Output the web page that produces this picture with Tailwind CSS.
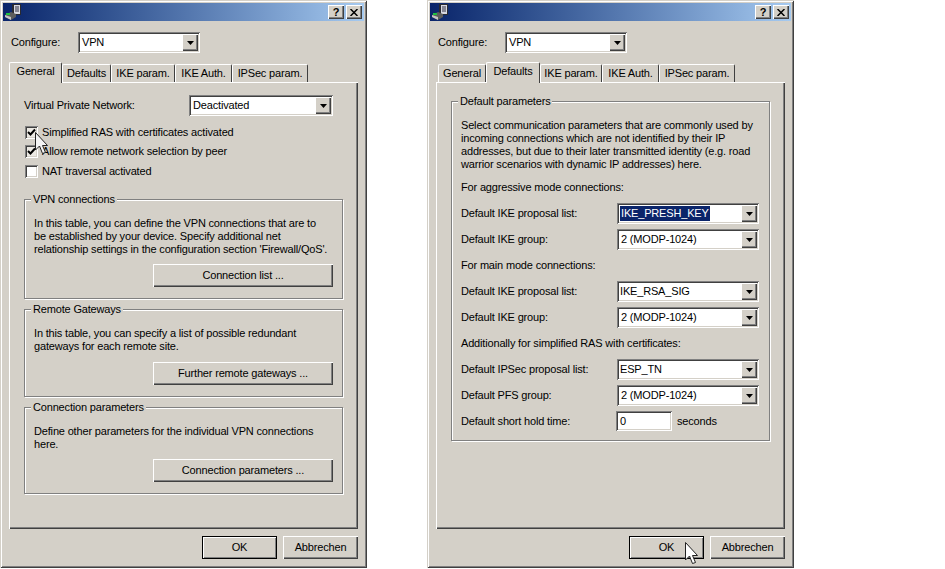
<!DOCTYPE html>
<html lang="en">
<head>
<meta charset="UTF-8">
<title>VPN configuration</title>
<script src="https://cdn.jsdelivr.net/npm/@tailwindcss/browser@4"></script>
</head>
<body class="bg-white">
<div class="flex gap-[60px] w-[945px] h-[569px] overflow-hidden font-['Liberation_Sans',Arial,sans-serif] text-[11px] tracking-[-0.17px] leading-[13px] text-black">

  <!-- left window: General -->
  <div class="relative w-[367px] h-[568px] p-[3px] bg-[#d4d0c8] shadow-[inset_1px_1px_0_#d4d0c8,inset_-1px_-1px_0_#404040,inset_2px_2px_0_#fff,inset_-2px_-2px_0_#808080]">
    <div class="flex items-center h-[18px] pl-[2px] pr-[2px] bg-linear-to-r from-[#0a246a] to-[#a6caf0]">
      <svg class="w-[16px] h-[16px]" viewBox="0 0 16 16"><rect x="7" y="0" width="9" height="11" fill="#2a2a30"/><rect x="9" y="1" width="6" height="9" fill="#d8d8e0"/><path d="M10 3h4M10 5h4M10 7h4" stroke="#334" stroke-width="1"/><path d="M0 11l6-3 5 2v3l-5 3-6-3z" fill="#5c5c5c"/><path d="M0 11l6 2v3l-6-3z" fill="#c4c4c4"/><rect x="1" y="9" width="4" height="2" fill="#20c040"/></svg>
      <div class="flex ml-auto gap-[2px]">
        <div class="flex items-center justify-center w-[16px] h-[14px] bg-[#d4d0c8] font-bold text-[11px] shadow-[inset_1px_1px_0_#fff,inset_-1px_-1px_0_#404040,inset_-2px_-2px_0_#808080]">?</div>
        <div class="flex items-center justify-center w-[16px] h-[14px] bg-[#d4d0c8] shadow-[inset_1px_1px_0_#fff,inset_-1px_-1px_0_#404040,inset_-2px_-2px_0_#808080]"><svg class="w-[8px] h-[7px]" viewBox="0 0 8 7"><path d="M0.5 0L7.5 7M7.5 0L0.5 7" stroke="#000" stroke-width="1.5"/></svg></div>
      </div>
    </div>
    <div class="px-[6px]">
      <div class="flex items-center mt-[11px] pl-[2px]">
        <span class="w-[67px]">Configure:</span>
        <div class="flex items-center justify-between w-[122px] h-[21px] p-[2px] pl-[4px] bg-white shadow-[inset_1px_1px_0_#808080,inset_-1px_-1px_0_#fff,inset_2px_2px_0_#404040,inset_-2px_-2px_0_#d4d0c8]">
          <span>VPN</span>
          <div class="flex items-center justify-center w-[16px] h-[17px] bg-[#d4d0c8] shadow-[inset_1px_1px_0_#fff,inset_-1px_-1px_0_#404040,inset_-2px_-2px_0_#808080]"><svg class="w-[7px] h-[4px]" viewBox="0 0 7 4"><path d="M0 0h7L3.5 4z"/></svg></div>
        </div>
      </div>
      <!-- tabs -->
      <div class="flex items-end h-[20px] mt-[9px]">
        <div class="relative z-10 flex items-center justify-center w-[53px] h-[21px] -mb-px pb-[3px] bg-[#d4d0c8] rounded-t-[2px] border-t border-l border-r border-t-white border-l-white border-r-[#404040]">General</div>
        <div class="flex items-center justify-center w-[49px] h-[18px] bg-[#d4d0c8] rounded-t-[2px] border-t border-l border-r border-t-white border-l-white border-r-[#404040]">Defaults</div>
        <div class="flex items-center justify-center w-[64px] h-[18px] bg-[#d4d0c8] rounded-t-[2px] border-t border-l border-r border-t-white border-l-white border-r-[#404040]">IKE param.</div>
        <div class="flex items-center justify-center w-[57px] h-[18px] bg-[#d4d0c8] rounded-t-[2px] border-t border-l border-r border-t-white border-l-white border-r-[#404040]">IKE Auth.</div>
        <div class="flex items-center justify-center w-[76px] h-[18px] bg-[#d4d0c8] rounded-t-[2px] border-t border-l border-r border-t-white border-l-white border-r-[#404040]">IPSec param.</div>
      </div>
      <!-- panel -->
      <div class="h-[447px] px-[15px] pt-[13px] bg-[#d4d0c8] shadow-[inset_1px_1px_0_#fff,inset_-1px_-1px_0_#404040,inset_-2px_-2px_0_#808080]">
        <div class="flex items-center justify-between w-[309px]">
          <span>Virtual Private Network:</span>
          <div class="flex items-center justify-between w-[144px] h-[21px] p-[2px] pl-[4px] bg-white shadow-[inset_1px_1px_0_#808080,inset_-1px_-1px_0_#fff,inset_2px_2px_0_#404040,inset_-2px_-2px_0_#d4d0c8]">
            <span>Deactivated</span>
            <div class="flex items-center justify-center w-[16px] h-[17px] bg-[#d4d0c8] shadow-[inset_1px_1px_0_#fff,inset_-1px_-1px_0_#404040,inset_-2px_-2px_0_#808080]"><svg class="w-[7px] h-[4px]" viewBox="0 0 7 4"><path d="M0 0h7L3.5 4z"/></svg></div>
          </div>
        </div>
        <div class="flex items-center h-[13px] mt-[10px] ml-px">
          <div class="flex items-center justify-center w-[13px] h-[13px] mr-[4px] bg-[#ece9e3] shadow-[inset_1px_1px_0_#808080,inset_-1px_-1px_0_#fff,inset_2px_2px_0_#404040,inset_-2px_-2px_0_#d4d0c8]"><svg class="w-[9px] h-[9px]" viewBox="0 0 9 9"><path d="M1 4l2.5 2.5L8 1.5" fill="none" stroke="#000" stroke-width="2"/></svg></div>
          <span>Simplified RAS with certificates activated</span>
        </div>
        <div class="flex items-center h-[13px] mt-[6px] ml-px">
          <div class="flex items-center justify-center w-[13px] h-[13px] mr-[4px] bg-[#ece9e3] shadow-[inset_1px_1px_0_#808080,inset_-1px_-1px_0_#fff,inset_2px_2px_0_#404040,inset_-2px_-2px_0_#d4d0c8]"><svg class="w-[9px] h-[9px]" viewBox="0 0 9 9"><path d="M1 4l2.5 2.5L8 1.5" fill="none" stroke="#000" stroke-width="2"/></svg></div>
          <span>Allow remote network selection by peer</span>
        </div>
        <div class="flex items-center h-[13px] mt-[7px] ml-px">
          <div class="w-[13px] h-[13px] mr-[4px] bg-white shadow-[inset_1px_1px_0_#808080,inset_-1px_-1px_0_#fff,inset_2px_2px_0_#404040,inset_-2px_-2px_0_#d4d0c8]"></div>
          <span>NAT traversal activated</span>
        </div>

        <div class="relative w-[319px] h-[100px] mt-[21px] pl-[9px] pr-[9px] pt-[17px] border border-[#808080] shadow-[1px_1px_0_#fff,inset_1px_1px_0_#fff]">
          <span class="absolute left-[6px] -top-[7px] px-[2px] bg-[#d4d0c8]">VPN connections</span>
          <p>In this table, you can define the VPN connections that are to<br>be established by your device. Specify additional net<br>relationship settings in the configuration section 'Firewall/QoS'.</p>
          <div class="flex items-center justify-center w-[180px] h-[23px] mt-[8px] ml-auto bg-[#d4d0c8] shadow-[inset_1px_1px_0_#fff,inset_-1px_-1px_0_#404040,inset_-2px_-2px_0_#808080]">Connection list ...</div>
        </div>
        <div class="relative w-[319px] h-[88px] mt-[10px] pl-[9px] pr-[9px] pt-[17px] border border-[#808080] shadow-[1px_1px_0_#fff,inset_1px_1px_0_#fff]">
          <span class="absolute left-[6px] -top-[7px] px-[2px] bg-[#d4d0c8]">Remote Gateways</span>
          <p>In this table, you can specify a list of possible redundant<br>gateways for each remote site.</p>
          <div class="flex items-center justify-center w-[180px] h-[23px] mt-[9px] ml-auto bg-[#d4d0c8] shadow-[inset_1px_1px_0_#fff,inset_-1px_-1px_0_#404040,inset_-2px_-2px_0_#808080]">Further remote gateways ...</div>
        </div>
        <div class="relative w-[319px] h-[87px] mt-[10px] pl-[9px] pr-[9px] pt-[17px] border border-[#808080] shadow-[1px_1px_0_#fff,inset_1px_1px_0_#fff]">
          <span class="absolute left-[6px] -top-[7px] px-[2px] bg-[#d4d0c8]">Connection parameters</span>
          <p>Define other parameters for the individual VPN connections<br>here.</p>
          <div class="flex items-center justify-center w-[180px] h-[23px] mt-[8px] ml-auto bg-[#d4d0c8] shadow-[inset_1px_1px_0_#fff,inset_-1px_-1px_0_#404040,inset_-2px_-2px_0_#808080]">Connection parameters ...</div>
        </div>
      </div>
      <div class="flex justify-end gap-[6px] mt-[7px]">
        <div class="flex items-center justify-center w-[75px] h-[23px] bg-[#d4d0c8] border border-black shadow-[inset_1px_1px_0_#fff,inset_-1px_-1px_0_#808080]">OK</div>
        <div class="flex items-center justify-center w-[75px] h-[23px] bg-[#d4d0c8] shadow-[inset_1px_1px_0_#fff,inset_-1px_-1px_0_#404040,inset_-2px_-2px_0_#808080]">Abbrechen</div>
      </div>
    </div>
    <svg class="absolute left-[35px] top-[132px] w-[13px] h-[23px]" viewBox="0 0 13 23"><path d="M0.5 0.5V18L4.5 14L7.5 21.5L10.5 20.5L7.5 13.5H12.5Z" fill="#f4f4f4" stroke="#222" stroke-width="1"/></svg>
  </div>

  <!-- right window: Defaults -->
  <div class="relative w-[367px] h-[568px] p-[3px] bg-[#d4d0c8] shadow-[inset_1px_1px_0_#d4d0c8,inset_-1px_-1px_0_#404040,inset_2px_2px_0_#fff,inset_-2px_-2px_0_#808080]">
    <div class="flex items-center h-[18px] pl-[2px] pr-[2px] bg-linear-to-r from-[#0a246a] to-[#a6caf0]">
      <svg class="w-[16px] h-[16px]" viewBox="0 0 16 16"><rect x="7" y="0" width="9" height="11" fill="#2a2a30"/><rect x="9" y="1" width="6" height="9" fill="#d8d8e0"/><path d="M10 3h4M10 5h4M10 7h4" stroke="#334" stroke-width="1"/><path d="M0 11l6-3 5 2v3l-5 3-6-3z" fill="#5c5c5c"/><path d="M0 11l6 2v3l-6-3z" fill="#c4c4c4"/><rect x="1" y="9" width="4" height="2" fill="#20c040"/></svg>
      <div class="flex ml-auto gap-[2px]">
        <div class="flex items-center justify-center w-[16px] h-[14px] bg-[#d4d0c8] font-bold text-[11px] shadow-[inset_1px_1px_0_#fff,inset_-1px_-1px_0_#404040,inset_-2px_-2px_0_#808080]">?</div>
        <div class="flex items-center justify-center w-[16px] h-[14px] bg-[#d4d0c8] shadow-[inset_1px_1px_0_#fff,inset_-1px_-1px_0_#404040,inset_-2px_-2px_0_#808080]"><svg class="w-[8px] h-[7px]" viewBox="0 0 8 7"><path d="M0.5 0L7.5 7M7.5 0L0.5 7" stroke="#000" stroke-width="1.5"/></svg></div>
      </div>
    </div>
    <div class="px-[6px]">
      <div class="flex items-center mt-[11px] pl-[2px]">
        <span class="w-[67px]">Configure:</span>
        <div class="flex items-center justify-between w-[122px] h-[21px] p-[2px] pl-[4px] bg-white shadow-[inset_1px_1px_0_#808080,inset_-1px_-1px_0_#fff,inset_2px_2px_0_#404040,inset_-2px_-2px_0_#d4d0c8]">
          <span>VPN</span>
          <div class="flex items-center justify-center w-[16px] h-[17px] bg-[#d4d0c8] shadow-[inset_1px_1px_0_#fff,inset_-1px_-1px_0_#404040,inset_-2px_-2px_0_#808080]"><svg class="w-[7px] h-[4px]" viewBox="0 0 7 4"><path d="M0 0h7L3.5 4z"/></svg></div>
        </div>
      </div>
      <div class="flex items-end h-[20px] mt-[9px] pl-[2px]">
        <div class="flex items-center justify-center w-[48px] h-[18px] bg-[#d4d0c8] rounded-t-[2px] border-t border-l border-r border-t-white border-l-white border-r-[#404040]">General</div>
        <div class="relative z-10 flex items-center justify-center w-[54px] h-[21px] -mb-px pb-[3px] bg-[#d4d0c8] rounded-t-[2px] border-t border-l border-r border-t-white border-l-white border-r-[#404040]">Defaults</div>
        <div class="flex items-center justify-center w-[62px] h-[18px] bg-[#d4d0c8] rounded-t-[2px] border-t border-l border-r border-t-white border-l-white border-r-[#404040]">IKE param.</div>
        <div class="flex items-center justify-center w-[57px] h-[18px] bg-[#d4d0c8] rounded-t-[2px] border-t border-l border-r border-t-white border-l-white border-r-[#404040]">IKE Auth.</div>
        <div class="flex items-center justify-center w-[76px] h-[18px] bg-[#d4d0c8] rounded-t-[2px] border-t border-l border-r border-t-white border-l-white border-r-[#404040]">IPSec param.</div>
      </div>
      <div class="h-[447px] px-[15px] pt-[19px] bg-[#d4d0c8] shadow-[inset_1px_1px_0_#fff,inset_-1px_-1px_0_#404040,inset_-2px_-2px_0_#808080]">
        <div class="relative w-[319px] pl-[9px] pr-[10px] pt-[17px] pb-[9px] border border-[#808080] shadow-[1px_1px_0_#fff,inset_1px_1px_0_#fff]">
          <span class="absolute left-[6px] -top-[7px] px-[2px] bg-[#d4d0c8]">Default parameters</span>
          <p>Select communication parameters that are commonly used by<br>incoming connections which are not identified by their IP<br>addresses, but due to their later transmitted identity (e.g. road<br>warrior scenarios with dynamic IP addresses) here.</p>
          <p class="mt-[10px]">For aggressive mode connections:</p>
          <div class="flex items-center justify-between mt-[9px]">
            <span>Default IKE proposal list:</span>
            <div class="flex items-center justify-between w-[142px] h-[21px] p-[2px] pl-[3px] bg-white shadow-[inset_1px_1px_0_#808080,inset_-1px_-1px_0_#fff,inset_2px_2px_0_#404040,inset_-2px_-2px_0_#d4d0c8]">
              <span class="px-px py-px bg-[#0a246a] text-white">IKE_PRESH_KEY</span>
              <div class="flex items-center justify-center w-[16px] h-[17px] bg-[#d4d0c8] shadow-[inset_1px_1px_0_#fff,inset_-1px_-1px_0_#404040,inset_-2px_-2px_0_#808080]"><svg class="w-[7px] h-[4px]" viewBox="0 0 7 4"><path d="M0 0h7L3.5 4z"/></svg></div>
            </div>
          </div>
          <div class="flex items-center justify-between mt-[5px]">
            <span>Default IKE group:</span>
            <div class="flex items-center justify-between w-[142px] h-[21px] p-[2px] pl-[4px] bg-white shadow-[inset_1px_1px_0_#808080,inset_-1px_-1px_0_#fff,inset_2px_2px_0_#404040,inset_-2px_-2px_0_#d4d0c8]">
              <span>2 (MODP-1024)</span>
              <div class="flex items-center justify-center w-[16px] h-[17px] bg-[#d4d0c8] shadow-[inset_1px_1px_0_#fff,inset_-1px_-1px_0_#404040,inset_-2px_-2px_0_#808080]"><svg class="w-[7px] h-[4px]" viewBox="0 0 7 4"><path d="M0 0h7L3.5 4z"/></svg></div>
            </div>
          </div>
          <p class="mt-[9px]">For main mode connections:</p>
          <div class="flex items-center justify-between mt-[9px]">
            <span>Default IKE proposal list:</span>
            <div class="flex items-center justify-between w-[142px] h-[21px] p-[2px] pl-[3px] bg-white shadow-[inset_1px_1px_0_#808080,inset_-1px_-1px_0_#fff,inset_2px_2px_0_#404040,inset_-2px_-2px_0_#d4d0c8]">
              <span>IKE_RSA_SIG</span>
              <div class="flex items-center justify-center w-[16px] h-[17px] bg-[#d4d0c8] shadow-[inset_1px_1px_0_#fff,inset_-1px_-1px_0_#404040,inset_-2px_-2px_0_#808080]"><svg class="w-[7px] h-[4px]" viewBox="0 0 7 4"><path d="M0 0h7L3.5 4z"/></svg></div>
            </div>
          </div>
          <div class="flex items-center justify-between mt-[5px]">
            <span>Default IKE group:</span>
            <div class="flex items-center justify-between w-[142px] h-[21px] p-[2px] pl-[4px] bg-white shadow-[inset_1px_1px_0_#808080,inset_-1px_-1px_0_#fff,inset_2px_2px_0_#404040,inset_-2px_-2px_0_#d4d0c8]">
              <span>2 (MODP-1024)</span>
              <div class="flex items-center justify-center w-[16px] h-[17px] bg-[#d4d0c8] shadow-[inset_1px_1px_0_#fff,inset_-1px_-1px_0_#404040,inset_-2px_-2px_0_#808080]"><svg class="w-[7px] h-[4px]" viewBox="0 0 7 4"><path d="M0 0h7L3.5 4z"/></svg></div>
            </div>
          </div>
          <p class="mt-[9px]">Additionally for simplified RAS with certificates:</p>
          <div class="flex items-center justify-between mt-[9px]">
            <span>Default IPSec proposal list:</span>
            <div class="flex items-center justify-between w-[142px] h-[21px] p-[2px] pl-[3px] bg-white shadow-[inset_1px_1px_0_#808080,inset_-1px_-1px_0_#fff,inset_2px_2px_0_#404040,inset_-2px_-2px_0_#d4d0c8]">
              <span>ESP_TN</span>
              <div class="flex items-center justify-center w-[16px] h-[17px] bg-[#d4d0c8] shadow-[inset_1px_1px_0_#fff,inset_-1px_-1px_0_#404040,inset_-2px_-2px_0_#808080]"><svg class="w-[7px] h-[4px]" viewBox="0 0 7 4"><path d="M0 0h7L3.5 4z"/></svg></div>
            </div>
          </div>
          <div class="flex items-center justify-between mt-[5px]">
            <span>Default PFS group:</span>
            <div class="flex items-center justify-between w-[142px] h-[21px] p-[2px] pl-[4px] bg-white shadow-[inset_1px_1px_0_#808080,inset_-1px_-1px_0_#fff,inset_2px_2px_0_#404040,inset_-2px_-2px_0_#d4d0c8]">
              <span>2 (MODP-1024)</span>
              <div class="flex items-center justify-center w-[16px] h-[17px] bg-[#d4d0c8] shadow-[inset_1px_1px_0_#fff,inset_-1px_-1px_0_#404040,inset_-2px_-2px_0_#808080]"><svg class="w-[7px] h-[4px]" viewBox="0 0 7 4"><path d="M0 0h7L3.5 4z"/></svg></div>
            </div>
          </div>
          <div class="flex items-center mt-[5px]">
            <span class="w-[155px]">Default short hold time:</span>
            <div class="flex items-center w-[56px] h-[20px] pl-[4px] bg-white shadow-[inset_1px_1px_0_#808080,inset_-1px_-1px_0_#fff,inset_2px_2px_0_#404040,inset_-2px_-2px_0_#d4d0c8]">0</div>
            <span class="ml-[5px]">seconds</span>
          </div>
        </div>
      </div>
      <div class="flex justify-end gap-[6px] mt-[7px]">
        <div class="flex items-center justify-center w-[75px] h-[23px] bg-[#d4d0c8] border border-black shadow-[inset_1px_1px_0_#fff,inset_-1px_-1px_0_#808080]">OK</div>
        <div class="flex items-center justify-center w-[75px] h-[23px] bg-[#d4d0c8] shadow-[inset_1px_1px_0_#fff,inset_-1px_-1px_0_#404040,inset_-2px_-2px_0_#808080]">Abbrechen</div>
      </div>
    </div>
    <svg class="absolute left-[258px] top-[542px] w-[13px] h-[23px]" viewBox="0 0 13 23"><path d="M0.5 0.5V18L4.5 14L7.5 21.5L10.5 20.5L7.5 13.5H12.5Z" fill="#fff" stroke="#222" stroke-width="1"/></svg>
  </div>
</div>
</body>
</html>
